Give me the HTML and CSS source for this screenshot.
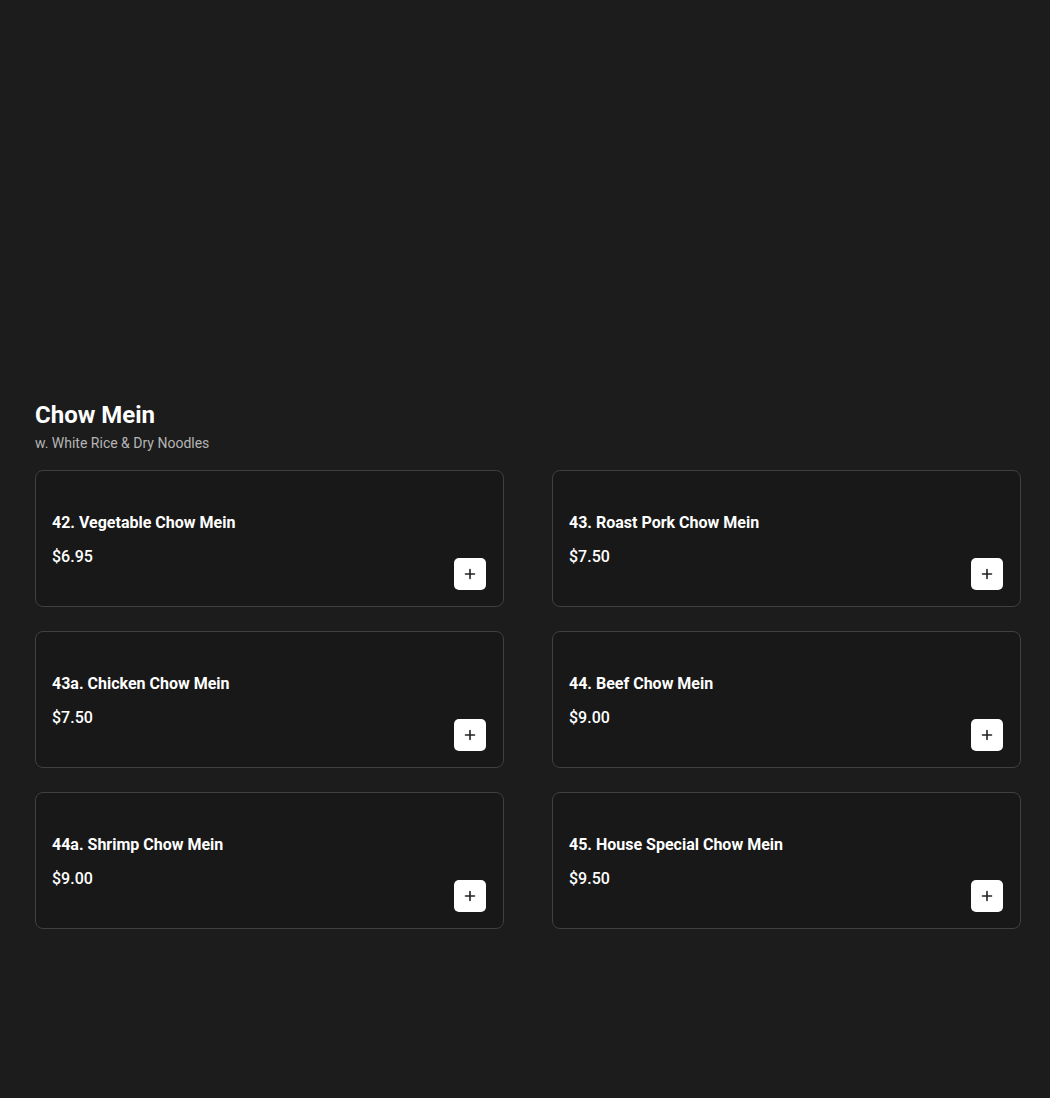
FILE: index.html
```html
<!DOCTYPE html>
<html>
<head>
<meta charset="utf-8">
<link rel="stylesheet" href="styles.css">
</head>
<body>
<main class="page">
  <section class="category">
    <h2 class="cat-title">Chow Mein</h2>
    <p class="cat-sub">w. White Rice &amp; Dry Noodles</p>
    <div class="grid">
      <div class="card"><div class="info"><div class="name">42. Vegetable Chow Mein</div><div class="price">$6.95</div></div><button class="add" aria-label="Add"><svg width="12" height="12" viewBox="0 0 12 12"><path d="M6 1.5v9M1.5 6h9" stroke="#222" stroke-width="1.6" stroke-linecap="round"/></svg></button></div>
      <div class="card"><div class="info"><div class="name">43. Roast Pork Chow Mein</div><div class="price">$7.50</div></div><button class="add" aria-label="Add"><svg width="12" height="12" viewBox="0 0 12 12"><path d="M6 1.5v9M1.5 6h9" stroke="#222" stroke-width="1.6" stroke-linecap="round"/></svg></button></div>
      <div class="card"><div class="info"><div class="name">43a. Chicken Chow Mein</div><div class="price">$7.50</div></div><button class="add" aria-label="Add"><svg width="12" height="12" viewBox="0 0 12 12"><path d="M6 1.5v9M1.5 6h9" stroke="#222" stroke-width="1.6" stroke-linecap="round"/></svg></button></div>
      <div class="card"><div class="info"><div class="name">44. Beef Chow Mein</div><div class="price">$9.00</div></div><button class="add" aria-label="Add"><svg width="12" height="12" viewBox="0 0 12 12"><path d="M6 1.5v9M1.5 6h9" stroke="#222" stroke-width="1.6" stroke-linecap="round"/></svg></button></div>
      <div class="card"><div class="info"><div class="name">44a. Shrimp Chow Mein</div><div class="price">$9.00</div></div><button class="add" aria-label="Add"><svg width="12" height="12" viewBox="0 0 12 12"><path d="M6 1.5v9M1.5 6h9" stroke="#222" stroke-width="1.6" stroke-linecap="round"/></svg></button></div>
      <div class="card"><div class="info"><div class="name">45. House Special Chow Mein</div><div class="price">$9.50</div></div><button class="add" aria-label="Add"><svg width="12" height="12" viewBox="0 0 12 12"><path d="M6 1.5v9M1.5 6h9" stroke="#222" stroke-width="1.6" stroke-linecap="round"/></svg></button></div>
    </div>
  </section>
</main>
</body>
</html>
```
FILE: styles.css
```css
* { box-sizing: border-box; }
html, body {
  margin: 0;
  background: #1c1c1c;
  color: #fff;
  font-family: Roboto, "Noto Sans", sans-serif;
}
.page {
  padding: 400px 29px 0 35px;
  min-height: 1098px;
}
.cat-title {
  margin: 0;
  font-size: 24px;
  font-weight: 700;
  line-height: 30px;
}
.cat-sub {
  margin: 4px 0 0;
  font-size: 14px;
  line-height: 18px;
  color: #b5b5b5;
}
.grid {
  margin-top: 18px;
  display: grid;
  grid-template-columns: 1fr 1fr;
  column-gap: 48px;
  row-gap: 24px;
}
.card {
  height: 137px;
  border: 1px solid #404040;
  border-radius: 8px;
  background: #181818;
  display: flex;
  justify-content: space-between;
  align-items: flex-end;
  padding: 0 17px 16px 16px;
}
.info {
  align-self: flex-start;
  padding-top: 40px;
}
.name {
  font-size: 16px;
  font-weight: 700;
  line-height: 24px;
}
.price {
  margin-top: 10px;
  font-size: 16px;
  font-weight: 500;
  line-height: 24px;
}
.add {
  width: 32px;
  height: 32px;
  border: none;
  border-radius: 5px;
  background: #fff;
  display: flex;
  align-items: center;
  justify-content: center;
  padding: 0;
  cursor: pointer;
}
```
